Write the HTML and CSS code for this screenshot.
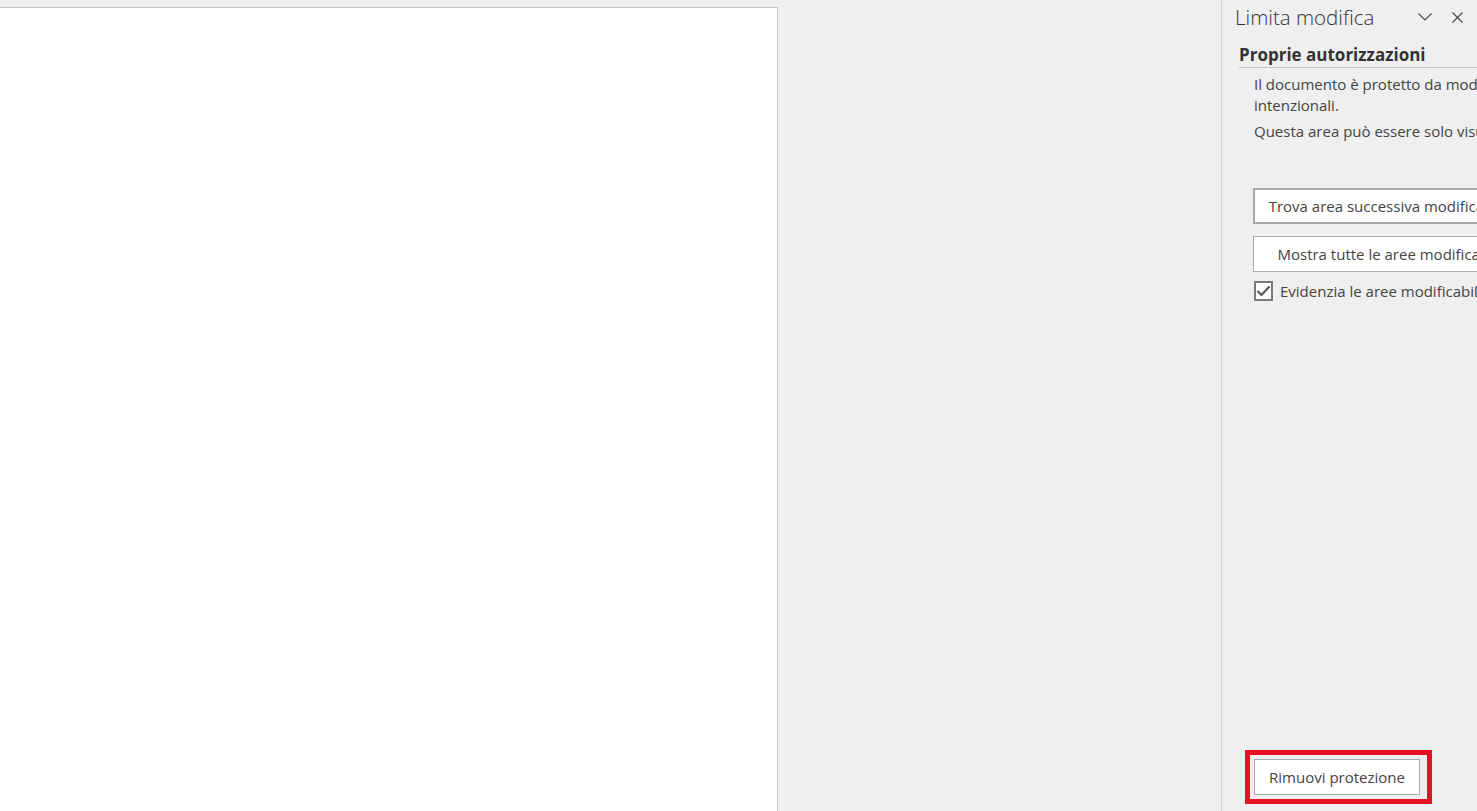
FILE: index.html
```html
<!DOCTYPE html>
<html lang="it">
<head>
    <meta charset="UTF-8">
    <meta name="viewport" content="width=device-width, initial-scale=1.0">
    <title>Limita modifica</title>
    <link rel="stylesheet" href="styles.css">
</head>
<body>
    <div class="workspace">
        <div class="doc-area">
            <div class="page"></div>
        </div>

        <aside class="pane">
            <div class="pane-header">
                <h1 class="pane-title">Limita modifica</h1>
                <button class="icon-btn" title="Opzioni riquadro attività">
                    <svg width="14" height="8" viewBox="0 0 14 8"><polyline points="0.5,0.5 7,7 13.5,0.5" fill="none" stroke="#444" stroke-width="1.1"/></svg>
                </button>
                <button class="icon-btn close" title="Chiudi">
                    <svg width="11" height="11" viewBox="0 0 11 11"><path d="M0.5 0.5 L10.5 10.5 M10.5 0.5 L0.5 10.5" fill="none" stroke="#444" stroke-width="1.1"/></svg>
                </button>
            </div>

            <div class="pane-body">
                <h2 class="section-title">Proprie autorizzazioni</h2>
                <div class="section">
                    <p>Il documento è protetto da modifiche non intenzionali.</p>
                    <p>Questa area può essere solo visualizzata.</p>

                    <div class="actions">
                        <button class="action focused">Trova area successiva modificabile</button>
                        <button class="action">Mostra tutte le aree modificabili</button>
                    </div>

                    <label class="check">
                        <span class="box">
                            <svg width="15" height="12" viewBox="0 0 15 12"><polyline points="1.5,6 5.5,10 13.5,1.5" fill="none" stroke="#555" stroke-width="2.2"/></svg>
                        </span>
                        Evidenzia le aree modificabili
                    </label>
                </div>
            </div>

            <div class="pane-footer">
                <div class="highlight">
                    <button class="remove">Rimuovi protezione</button>
                </div>
            </div>
        </aside>
    </div>
</body>
</html>
```

FILE: styles.css
```css
body {
    margin: 0;
    padding: 0;
    background-color: #efefef;
    font-family: "Open Sans", "Noto Sans", sans-serif;
    color: #444;
    overflow: hidden;
}

.workspace {
    display: flex;
    height: 100vh;
}

.doc-area {
    width: 1221px;
    padding-top: 7px;
    box-sizing: border-box;
}

.page {
    width: 778px;
    height: 100%;
    background: #fff;
    border-top: 1px solid #c6c6c6;
    border-right: 1px solid #c6c6c6;
    box-sizing: border-box;
}

.pane {
    flex: 1;
    display: flex;
    flex-direction: column;
    border-left: 1px solid #d2d2d2;
    overflow: hidden;
}

.pane-header {
    display: flex;
    align-items: center;
    height: 34px;
    padding: 0 10px 0 13px;
}

.pane-title {
    flex: 1;
    margin: 0;
    font-size: 20.5px;
    font-weight: 300;
    color: #333;
    white-space: nowrap;
}

.icon-btn {
    background: none;
    border: none;
    padding: 0;
    width: 20px;
    height: 20px;
    display: flex;
    align-items: center;
    justify-content: center;
    cursor: pointer;
}

.icon-btn.close {
    margin-left: 12px;
}

.pane-body {
    flex: 1;
    padding-left: 17px;
}

.section-title {
    margin: 9px 0 0;
    padding-bottom: 1px;
    font-size: 17px;
    font-weight: 700;
    color: #333;
    border-bottom: 1px solid #c8c8c8;
    white-space: nowrap;
}

.section {
    padding-left: 15px;
    font-size: 15px;
    white-space: nowrap;
}

.section p {
    margin: 5px 0 0;
    line-height: 21px;
    white-space: normal;
    width: 300px;
}

.section p:first-child {
    margin-top: 6px;
}

.section p + p {
    white-space: nowrap;
}

.actions {
    margin-top: 46px;
}

.action {
    display: block;
    width: 272px;
    height: 36px;
    margin: 0 0 12px -1px;
    background: #fff;
    border: 1px solid #ababab;
    font-family: inherit;
    font-size: 15px;
    color: #444;
    text-align: center;
    white-space: nowrap;
    cursor: pointer;
}

.action.focused {
    border: 2px solid #a8a8a8;
}

.check {
    display: flex;
    align-items: center;
    margin-top: -3px;
    gap: 7px;
}

.box {
    width: 16px;
    height: 16px;
    border: 2px solid #7a7a7a;
    background: #fff;
    display: flex;
    align-items: center;
    justify-content: center;
}

.pane-footer {
    padding: 0 0 7px 23px;
}

.highlight {
    display: inline-block;
    border: 5px solid #e81123;
    padding: 4px 7px 4px 4px;
}

.remove {
    display: block;
    width: 166px;
    height: 36px;
    background: #fff;
    border: 1px solid #ababab;
    font-family: inherit;
    font-size: 15px;
    color: #444;
    cursor: pointer;
}
```
